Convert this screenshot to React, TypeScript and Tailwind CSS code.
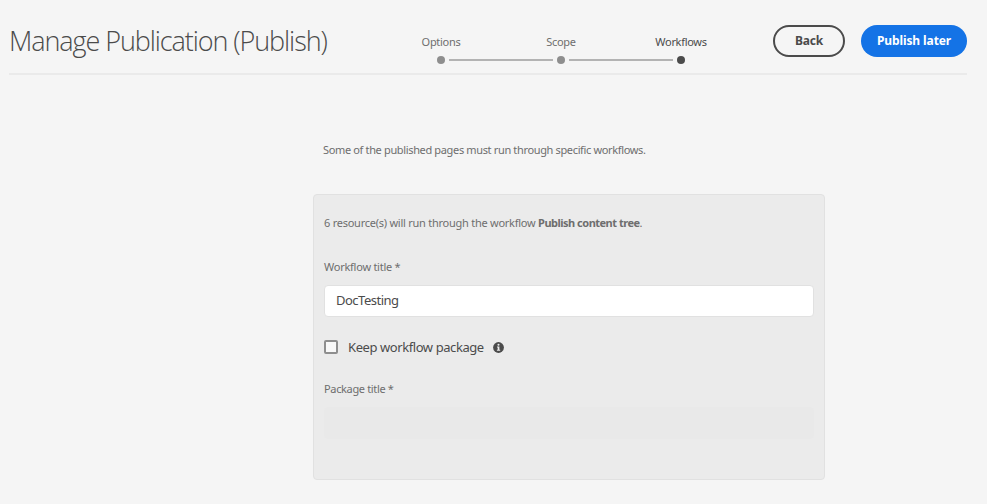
const steps = [
  { label: "Options", active: false },
  { label: "Scope", active: false },
  { label: "Workflows", active: true },
];

function InfoIcon() {
  return (
    <svg className="ml-[9px] size-[11px]" viewBox="0 0 11 11" aria-hidden="true">
      <circle cx="5.5" cy="5.5" r="5.4" fill="#4b4b4b" />
      <circle cx="5.5" cy="2.7" r="1.05" fill="#ebebeb" />
      <path d="M4 4.6h2.4v3.2h.8v1H3.9v-1h.8V5.6H4z" fill="#ebebeb" />
    </svg>
  );
}

function Steps() {
  return (
    <ol className="mt-[34px] ml-[51px] grid w-[360px] shrink-0 grid-cols-3">
      {steps.map((step, i) => (
        <li key={step.label} className="flex flex-col items-center">
          <span className={`text-[11px] leading-4 tracking-[-0.3px] ${step.active ? "text-[#4b4b4b]" : "text-[#6e6e6e]"}`}>
            {step.label}
          </span>
          <span className="mt-[6px] flex w-full items-center gap-1">
            <i className={`h-[2px] flex-1 ${i > 0 ? "bg-[#b3b3b3]" : ""}`} />
            <i className={`size-2 rounded-full ${step.active ? "bg-[#4b4b4b]" : "bg-[#8e8e8e]"}`} />
            <i className={`h-[2px] flex-1 ${i < 2 ? "bg-[#b3b3b3]" : ""}`} />
          </span>
        </li>
      ))}
    </ol>
  );
}

export default function App() {
  return (
    <main className="h-[504px] w-[987px] overflow-hidden bg-[#f5f5f5] pl-[9px] pr-5 font-['Noto_Sans','Open_Sans',sans-serif] text-[#4b4b4b]">
      <header className="flex h-[75px] items-start border-b-2 border-[#eaeaea]">
        <h1 className="mt-[23px] w-[321px] shrink-0 whitespace-nowrap font-['Open_Sans',sans-serif] text-[27px] leading-9 font-light tracking-[-1.08px]">
          Manage Publication (Publish)
        </h1>
        <Steps />
        <button className="mt-[25px] ml-[32px] h-8 w-[72px] shrink-0 rounded-full border-2 border-[#4b4b4b] text-[12px] leading-4 font-bold tracking-[-0.15px]">
          Back
        </button>
        <button className="mt-[25px] ml-4 h-8 w-[106px] shrink-0 rounded-full bg-[#1473e6] text-[12px] leading-4 font-bold tracking-[-0.1px] text-white">
          Publish later
        </button>
      </header>
      <p className="mt-[67px] ml-[314px] text-[11px] leading-4 tracking-[-0.35px] whitespace-nowrap text-[#6e6e6e]">
        Some of the published pages must run through specific workflows.
      </p>
      <section className="mt-[36px] ml-[304px] h-[286px] w-[512px] rounded border border-[#e1e1e1] bg-[#ebebeb] px-[10px] pt-5">
        <p className="text-[11px] leading-4 tracking-[-0.25px] whitespace-nowrap text-[#6e6e6e]">
          6 resource(s) will run through the workflow <b className="tracking-[-0.5px]">Publish content tree</b>.
        </p>
        <label className="mt-7 block text-[11px] leading-4 tracking-[-0.25px] text-[#6e6e6e]">Workflow title *</label>
        <input
          className="mt-[10px] block h-8 w-full rounded border border-[#e1e1e1] bg-white px-[11px] pb-[2px] text-[13px] tracking-[-0.5px] text-[#4b4b4b] outline-none"
          defaultValue="DocTesting"
        />
        <div className="mt-[20px] flex h-5 items-center">
          <i className="size-[14px] rounded-[2px] border-2 border-[#8e8e8e] bg-[#f8f8f8]" />
          <span className="ml-[10px] text-[13px] leading-5 tracking-[-0.42px]">Keep workflow package</span>
          <InfoIcon />
        </div>
        <label className="mt-6 block text-[11px] leading-4 tracking-[-0.35px] text-[#6e6e6e]">Package title *</label>
        <div className="mt-[10px] h-8 rounded bg-[#e9e9e9]" />
      </section>
    </main>
  );
}
